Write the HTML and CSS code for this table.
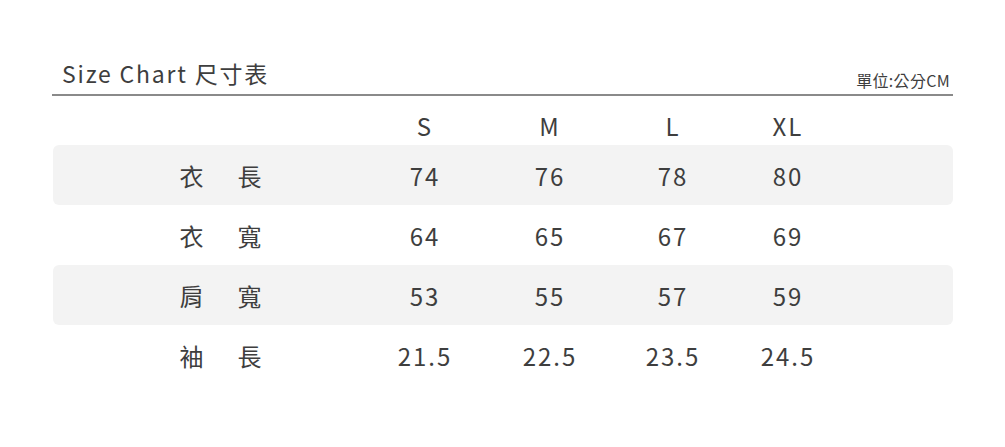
FILE: index.html
```html
<!DOCTYPE html>
<html lang="zh-Hant">
<head>
<meta charset="utf-8">
<title>Size Chart</title>
<link rel="stylesheet" href="styles.css">
</head>
<body>
<div class="chart">
  <div class="head">
    <h1 class="title">Size Chart 尺寸表</h1>
    <span class="unit">單位:公分CM</span>
  </div>
  <div class="row row-head">
    <div class="label"></div>
    <div class="cell">S</div>
    <div class="cell">M</div>
    <div class="cell">L</div>
    <div class="cell">XL</div>
    <div></div>
  </div>
  <div class="row shaded">
    <div class="label"><span>衣</span><span>長</span></div>
    <div class="cell">74</div>
    <div class="cell">76</div>
    <div class="cell">78</div>
    <div class="cell">80</div>
    <div></div>
  </div>
  <div class="row">
    <div class="label"><span>衣</span><span>寬</span></div>
    <div class="cell">64</div>
    <div class="cell">65</div>
    <div class="cell">67</div>
    <div class="cell">69</div>
    <div></div>
  </div>
  <div class="row shaded">
    <div class="label"><span>肩</span><span>寬</span></div>
    <div class="cell">53</div>
    <div class="cell">55</div>
    <div class="cell">57</div>
    <div class="cell">59</div>
    <div></div>
  </div>
  <div class="row">
    <div class="label"><span>袖</span><span>長</span></div>
    <div class="cell">21.5</div>
    <div class="cell">22.5</div>
    <div class="cell">23.5</div>
    <div class="cell">24.5</div>
    <div></div>
  </div>
</div>
</body>
</html>
```
FILE: styles.css
```css
html, body {
  margin: 0;
  padding: 0;
  background: #ffffff;
}
body {
  font-family: "Noto Sans CJK TC", "Noto Sans", sans-serif;
  color: #3e3e3e;
}
.chart {
  width: 900px;
  margin-left: 53px;
  padding-top: 57px;
}
.head {
  display: flex;
  justify-content: space-between;
  align-items: flex-end;
  border-bottom: 2px solid #8a8a8a;
  margin-left: -1px;
  padding-left: 10px;
  padding-right: 3px;
}
.title {
  margin: 0;
  font-size: 23px;
  font-weight: 400;
  letter-spacing: 1.8px;
  line-height: 32px;
  padding-bottom: 5px;
}
.unit {
  font-size: 16px;
  letter-spacing: 0.3px;
  line-height: 22px;
  padding-bottom: 3px;
}
.row {
  display: grid;
  grid-template-columns: 309px 124px 126px 120px 110px 1fr;
  align-items: center;
  height: 60px;
  font-size: 24px;
  letter-spacing: 2px;
}
.row-head {
  height: 49px;
  align-items: start;
  padding-top: 15px;
  box-sizing: border-box;
  line-height: 30px;
}
.shaded {
  background: #f3f3f3;
  border-radius: 6px;
}
.label {
  display: flex;
  justify-content: center;
  gap: 34px;
  padding-left: 26px;
  letter-spacing: 0;
}
.cell {
  text-align: center;
  padding-left: 2px;
}
```
